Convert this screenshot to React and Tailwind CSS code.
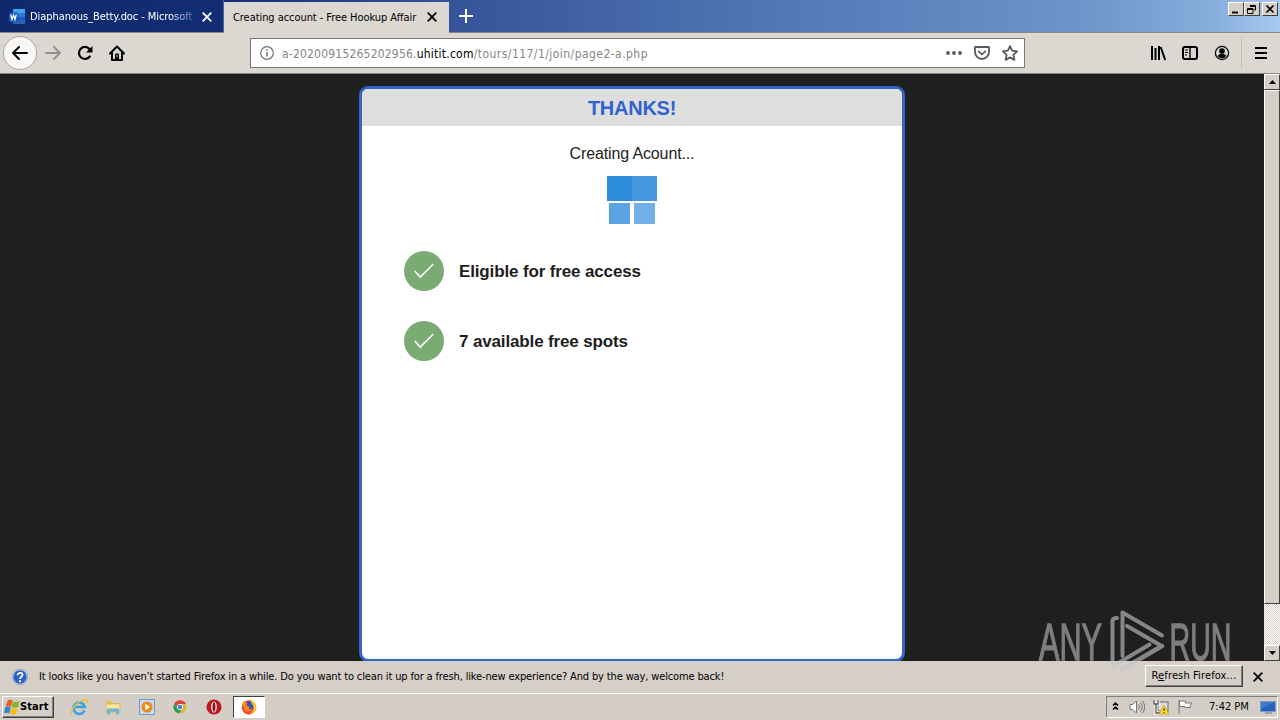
import React from "react";

const ui = "font-['DejaVu_Sans_Condensed','DejaVu_Sans',sans-serif] [font-stretch:condensed] whitespace-pre";

function Cross({ className, width = 1.8 }) {
  return (
    <svg className={className} viewBox="0 0 10 10" fill="none" stroke="currentColor" strokeWidth={width}>
      <path d="M.7.7l8.6 8.6M9.3.7L.7 9.3" />
    </svg>
  );
}

function WordIcon() {
  return (
    <svg className="h-4 w-4 shrink-0" viewBox="0 0 16 16">
      <rect x="4" y="0" width="12" height="4" fill="#41a5ee" />
      <rect x="4" y="4" width="12" height="4" fill="#2b7cd3" />
      <rect x="4" y="8" width="12" height="3" fill="#185abd" />
      <rect x="4" y="11" width="12" height="4" fill="#2a62b4" />
      <rect x="0" y="3.500" width="9" height="9" rx="1" fill="#185abd" />
      <path d="M1.700 5.500l1.300 5 1.500-4.600L6 10.500l1.300-5" fill="none" stroke="#fff" strokeWidth="1.200" />
    </svg>
  );
}

function TabStrip() {
  return (
    <header className="flex h-[33px] shrink-0 border-b border-[#8a8780] bg-[linear-gradient(90deg,#0e2a6c_0%,#122d74_17%,#36549a_36%,#5379b7_62%,#7095ca_85%,#88aedd_95%,#a6caf0_100%)]">
      <div className={`${ui} flex w-56 items-center border-r border-[#4b6299] pl-[9px] pt-[2px] text-[11px] text-white`}>
        <WordIcon />
        <span className="ml-[5px] w-[164px] overflow-hidden tracking-[-0.07px] [mask-image:linear-gradient(90deg,#000_85%,rgba(0,0,0,.25)_100%)]">Diaphanous_Betty.doc - Microsoft</span>
        <Cross className="ml-2 h-[10px] w-[10px] shrink-0" />
      </div>
      <div className={`${ui} -mb-px mt-[2px] flex w-[225px] items-center bg-[#dbd8d1] pl-[9px] text-[11px] text-black`}>
        <span className="w-[185px] pt-px tracking-[-0.06px]">Creating account - Free Hookup Affair</span>
        <Cross className="-mt-px ml-[9px] h-[10px] w-[10px]" />
      </div>
      <div className="flex w-[34px] items-center justify-center">
        <svg className="h-[14px] w-[14px]" viewBox="0 0 14 14" stroke="#fff" strokeWidth="2"><path d="M7 0v14M0 7h14" /></svg>
      </div>
      <div className="ml-auto mr-[2px] mt-[2px] flex h-[14px]">
        <WindowButton><path d="M3 9.500h6" strokeWidth="2" /></WindowButton>
        <WindowButton><path d="M5 2.500h5.500V7H9M5 3.500h5.500M2.500 5.500H8v5H2.500zM2.500 6.500H8" /></WindowButton>
        <span className="w-[2px]" />
        <WindowButton><path d="M3.500 2.500l7 7M10.500 2.500l-7 7" strokeWidth="1.600" /></WindowButton>
      </div>
    </header>
  );
}

function WindowButton({ children }) {
  return (
    <span className="flex h-[14px] w-4 border border-t-white border-l-white border-r-[#404040] border-b-[#404040] bg-[#d4d0c8]">
      <svg className="h-3 w-[14px]" viewBox="0 0 14 12" fill="none" stroke="#000">{children}</svg>
    </span>
  );
}

function NavBar() {
  return (
    <nav className="flex h-[41px] shrink-0 items-center border-b border-[#8b8984] bg-[#dbd8d1]">
      <span className="ml-[3px] flex h-[34px] w-[34px] items-center justify-center rounded-full border border-[#aaa79f] bg-[#f9f8f6]">
        <svg className="h-4 w-4" viewBox="0 0 16 16" fill="none" stroke="#000" strokeWidth="2" strokeLinecap="round" strokeLinejoin="round"><path d="M15 8H1.500M7 2L1 8l6 6" /></svg>
      </span>
      <svg className="ml-2 h-4 w-4" viewBox="0 0 16 16" fill="none" stroke="#93908b" strokeWidth="1.800" strokeLinecap="round" strokeLinejoin="round"><path d="M1 8h13.500M9 2l6 6-6 6" /></svg>
      <svg className="ml-4 h-4 w-4" viewBox="0 0 16 16" fill="none" stroke="#000" strokeWidth="2.200" strokeLinecap="round"><path d="M12.800 11.500A6 6 0 1 1 12.500 4" /><path d="M15.500 1v6.500H9z" fill="#000" stroke="none" /></svg>
      <svg className="ml-4 h-4 w-4" viewBox="0 0 16 16" fill="none" stroke="#000" strokeWidth="2" strokeLinecap="round" strokeLinejoin="round"><path d="M1 8.500L8 1.500l7 7M3 7.500V15h10V7.500" /><path d="M6.500 14V9h3v5" fill="#000" strokeWidth="1" /><path d="M8 10v2" stroke="#dbd8d1" strokeWidth="1" /></svg>
      <div className={`${ui} ml-[125px] flex h-[30px] w-[775px] items-center border border-[#7a7872] bg-white text-[12px] text-[#85858a]`}>
        <svg className="ml-[9px] h-[14px] w-[14px]" viewBox="0 0 14 14" fill="none" stroke="#737373"><circle cx="7" cy="7" r="6.300" strokeWidth="1.200" /><path d="M7 6.200V10.500M7 3.200v1.600" strokeWidth="1.600" /></svg>
        <span className="ml-[8px] w-[560px] pt-px">
          <span className="tracking-[0.2px]">a-20200915265202956.</span><span className="tracking-[0.24px] text-black">uhitit.com</span><span className="tracking-[0.45px]">/tours/117/1/join/page2-a.php</span>
        </span>
        <svg className="ml-auto h-4 w-4" viewBox="0 0 16 16" fill="#5a5a5c"><circle cx="2" cy="8" r="1.900" /><circle cx="8" cy="8" r="1.900" /><circle cx="14" cy="8" r="1.900" /></svg>
        <svg className="ml-3 h-4 w-4" viewBox="0 0 16 16" fill="none" stroke="#5a5a5c" strokeWidth="1.800" strokeLinecap="round" strokeLinejoin="round"><path d="M1 2h14v5a7 7 0 0 1-14 0z" /><path d="M4.700 6.300L8 9.500l3.300-3.200" strokeWidth="1.700" /></svg>
        <svg className="ml-3 mr-[6px] h-4 w-4" viewBox="0 0 16 16" fill="none" stroke="#5a5a5c" strokeWidth="1.800" strokeLinejoin="round"><path d="M8 1l2.100 4.700 5 .6-3.700 3.500 1 5.100L8 12.400l-4.400 2.500 1-5.100L.9 6.300l5-.6z" /></svg>
      </div>
      <svg className="ml-[125px] h-4 w-4" viewBox="0 0 16 16" fill="none" stroke="#000" strokeWidth="2"><path d="M2 1v14M5.500 3v12M9 1v14M10.700 2l4.500 13" /></svg>
      <svg className="ml-4 h-4 w-4" viewBox="0 0 16 16" fill="none" stroke="#000" strokeWidth="2"><rect x="1" y="2" width="14" height="12" rx="2" /><path d="M8 2v12" strokeWidth="1.400" /><path d="M3 5h3M3 7.500h3M3 10h2" strokeWidth="1" /></svg>
      <svg className="ml-4 h-4 w-4" viewBox="0 0 16 16"><circle cx="8" cy="8" r="6.600" fill="none" stroke="#000" strokeWidth="1.200" /><circle cx="8" cy="6" r="2.800" /><path d="M3.500 11c1.200-1.800 2.600-2.300 4.500-2.300s3.300.5 4.500 2.300A6 6 0 0 1 8 13.500 6 6 0 0 1 3.500 11z" /></svg>
      <span className="ml-[11px] h-8 w-px bg-[#c2bfb7]" />
      <svg className="ml-3 h-[14px] w-[14px]" viewBox="0 0 14 14" stroke="#000" strokeWidth="2"><path d="M1 2h12M1 7h12M1 12h12" /></svg>
    </nav>
  );
}

function Check({ children }) {
  return (
    <li className="flex h-10 items-center">
      <span className="flex h-10 w-10 items-center justify-center rounded-full bg-[#7aab73]">
        <svg className="h-4 w-5" viewBox="0 0 20 16" fill="none" stroke="#fff" strokeWidth="1.600"><path d="M.7 8l5.600 6L19.300 1" /></svg>
      </span>
      <span className="ml-[15px] whitespace-pre pt-[2px] font-['Liberation_Sans',sans-serif] text-[17px] font-bold tracking-[-0.14px] text-[#1d1d1d]">{children}</span>
    </li>
  );
}

function Watermark() {
  return (
    <svg className="absolute left-[1030px] top-[596px] h-[90px] w-[220px] overflow-visible" viewBox="1030 596 220 90" opacity=".62">
      <g fill="#b8b8b8" stroke="#b8b8b8" strokeWidth="1.300" fontFamily="'Liberation Sans Narrow','Liberation Sans',sans-serif" fontSize="52">
        <text x="1039" y="659.500" textLength="63" lengthAdjust="spacingAndGlyphs">ANY</text>
        <text x="1169.500" y="659.500" textLength="62" lengthAdjust="spacingAndGlyphs">RUN</text>
      </g>
      <g fill="none" stroke="#c6c6c6" strokeLinejoin="round" strokeLinecap="round">
        <path d="M1122.500 656V612.500L1162 635.500M1127 626l33 19" strokeWidth="4" />
        <path d="M1117 618q-4.500 0-4.500 3v45.500l37-22" strokeWidth="4" />
        <path d="M1122.500 669l39.500-23" strokeWidth="4.500" />
      </g>
    </svg>
  );
}

function Scrollbar() {
  const cap = "flex h-4 w-4 items-center justify-center border border-t-white border-l-white border-r-[#404040] border-b-[#404040] bg-[#d4d0c8]";
  return (
    <div className="flex w-4 flex-col bg-[repeating-conic-gradient(#fff_0_25%,#d4d0c8_0_50%)] bg-[length:2px_2px]">
      <span className={cap}><svg className="h-1 w-[7px]" viewBox="0 0 7 4"><path d="M0 4l3.500-4L7 4z" /></svg></span>
      <span className="h-[514px] border border-t-white border-l-white border-r-[#404040] border-b-[#404040] bg-[#d4d0c8]" />
      <span className={`${cap} mt-auto`}><svg className="h-1 w-[7px]" viewBox="0 0 7 4"><path d="M0 0l3.500 4L7 0z" /></svg></span>
    </div>
  );
}

function Page() {
  return (
    <main className="flex h-[587px] shrink-0 bg-[#1f1f1f]">
      <div className="flex flex-1 justify-center pt-3">
        <section className="h-[576px] w-[546px] overflow-hidden rounded-[9px] border-[3px] border-[#3465c9] bg-white font-['Liberation_Sans',sans-serif]">
          <h1 className="h-[37px] bg-[#dedede] text-center text-[20px] font-bold leading-[38px] tracking-[-0.25px] text-[#3163cf]">THANKS!</h1>
          <p className="mt-[17px] text-center text-[16px] leading-[22px] tracking-[-0.13px] text-[#222]">Creating Acount...</p>
          <div className="mx-auto mt-[11px] flex h-[50px] w-[50px] flex-wrap content-start">
            <span className="h-[25px] w-[25px] bg-[#2c8cda]" />
            <span className="h-[25px] w-[25px] bg-[#4598de]" />
            <span className="ml-[2px] mt-[2px] h-[21px] w-[21px] bg-[#5ba4e4]" />
            <span className="ml-1 mt-[2px] h-[21px] w-[21px] bg-[#71b1e8]" />
          </div>
          <ul className="ml-[42px] mt-[25px] flex flex-col gap-[30px]">
            <Check>Eligible for free access</Check>
            <Check>7 available free spots</Check>
          </ul>
        </section>
      </div>
      <Scrollbar />
    </main>
  );
}

function Notice() {
  return (
    <div className={`${ui} flex h-8 shrink-0 items-center bg-[#d6cfc8] text-[11px] text-black`}>
      <svg className="ml-3 h-4 w-4" viewBox="0 0 16 16"><circle cx="8" cy="8" r="7.300" fill="#2e61c5" stroke="#fff" /><circle cx="8" cy="8" r="7.700" fill="none" stroke="#5878b5" strokeWidth=".6" /><path d="M5.700 6.300c0-3.300 4.800-3.200 4.800-.4C10.500 7.500 8 7.800 8 10" fill="none" stroke="#fff" strokeWidth="1.800" /><circle cx="8" cy="12.200" r="1.100" fill="#fff" /></svg>
      <span className="ml-[11px] pt-px tracking-[-0.14px]">It looks like you haven’t started Firefox in a while. Do you want to clean it up for a fresh, like-new experience? And by the way, welcome back!</span>
      <button className="ml-auto mr-[10px] h-[22px] w-[98px] -translate-y-px border border-t-white border-l-white border-r-[#404040] border-b-[#404040] pt-px tracking-[0.13px] shadow-[inset_-1px_-1px_#808080]">R<u>e</u>fresh Firefox...</button>
      <Cross className="mr-[17px] h-[10px] w-[10px]" />
    </div>
  );
}

function Taskbar() {
  return (
    <footer className="flex h-[27px] shrink-0 items-center border-t border-white bg-[#d4cec7]">
      <button className="ml-[2px] flex h-[22px] w-[52px] items-center border border-t-white border-l-white border-r-[#404040] border-b-[#404040] shadow-[inset_-1px_-1px_#808080]">
        <svg className="ml-px h-4 w-4" viewBox="0 0 16 16"><path d="M3.500 1.500c2-1 3.500-1 5 .2L7 8C5.500 6.800 3.500 6.800 1.500 7.700z" fill="#ee5b23" /><path d="M9 2.200c2 1 3.800 1 6.500-.2L14 8c-2 1-4.500 1-6.500 0z" fill="#7eb92e" /><path d="M1.200 8.300c2-1 3.800-1 5.500.2L5.200 14.500c-1.500-1-3.200-1-5.200-.2z" fill="#2f83d6" /><path d="M7.300 9c2 1 4.200 1 6.400.2L12.200 15c-2 1-4.500 1-6.400-.2z" fill="#fbbb12" /></svg>
        <span className={`${ui} text-[11px] font-bold tracking-[0.1px] text-black`}>Start</span>
      </button>
      <svg className="ml-4 h-[18px] w-[18px]" viewBox="0 0 18 18" fill="none"><path d="M14.500 12.500A5.700 5.700 0 1 1 14.800 9H5" stroke="#36a4e2" strokeWidth="2.600" /><path d="M2 16.500C-2 13 11-.5 16.500 2c1 .7.500 2.500-.5 4" stroke="#efbe35" strokeWidth="1.400" /></svg>
      <svg className="ml-4 h-[18px] w-[18px]" viewBox="0 0 18 18"><path d="M2 3h5l1 2h8v10H2z" fill="#e6bf58" /><path d="M2 6h14v7H2z" fill="#fbe69b" stroke="#cda94b" strokeWidth=".6" /><path d="M3 16.500v-6h12v6h-3v-3H6v3z" fill="#67b6df" /></svg>
      <svg className="ml-4 h-[18px] w-[18px]" viewBox="0 0 18 18"><rect x="1.500" y="1.500" width="15" height="15" fill="#c6dcf3" stroke="#6c9ccd" /><circle cx="9" cy="9" r="5.600" fill="#f28816" /><path d="M7.300 5.700l5 3.300-5 3.300z" fill="#fff" /></svg>
      <svg className="ml-4 h-[16px] w-[16px]" viewBox="0 0 16 16"><circle cx="8" cy="8" r="6.500" fill="#e0b72c" /><path d="M2.200 5A6.500 6.500 0 0 1 14 5H8v6z" fill="#db4437" /><path d="M2.200 5A6.500 6.500 0 0 0 7 14.400L10.500 9 8 10 5.500 9z" fill="#249c59" /><circle cx="8" cy="8" r="3" fill="#fff" /><circle cx="8" cy="8" r="2.300" fill="#4285e8" /></svg>
      <svg className="ml-[18px] h-4 w-4" viewBox="0 0 16 16"><circle cx="8" cy="8" r="7.500" fill="#bd1720" /><ellipse cx="8" cy="8" rx="2.800" ry="5.500" fill="#fff" /><ellipse cx="8" cy="8" rx="1.500" ry="4.700" fill="#981017" /></svg>
      <span className="ml-[11px] flex h-[22px] w-8 items-center justify-center border border-t-[#404040] border-l-[#404040] border-r-white border-b-white bg-white">
        <svg className="h-4 w-4" viewBox="0 0 16 16"><circle cx="8" cy="8.500" r="7.200" fill="#ee4a2c" /><circle cx="8.500" cy="6.800" r="4.800" fill="#3a4cb4" /><path d="M1.500 5Q1.800 3 3 1.800 4 3.500 6.500 4 5 5.500 6 7l3 1-1.500 1.500Q9.500 11 11.500 9q-1.500 4-5 3.500T1.500 5z" fill="#ff8716" /><path d="M9 .3c5.500 2 8 8 5 12-1.500 2.200-4 3.200-6 3.200 4-2.500 5.500-5.500 4-9C11.200 4.500 9 3 9 .3z" fill="#ffc42c" /></svg>
      </span>
      <div className="ml-auto mr-[2px] flex h-[22px] w-[172px] items-center border border-t-[#808080] border-l-[#808080] border-r-white border-b-white">
        <svg className="ml-[5px] -mt-[2px] h-2 w-[7px]" viewBox="0 0 7 8" fill="none" stroke="#000" strokeWidth="1.500"><path d="M1 3.500L3.500 1 6 3.500M1 7.500L3.500 5 6 7.500" /></svg>
        <svg className="ml-[10px] h-4 w-4" viewBox="0 0 16 16" fill="none" stroke="#777"><path d="M1 5.500h2.500L7.500 2v12l-4-3.500H1z" fill="#fff" /><path d="M9.500 5.500q2 2.500 0 5M11.500 3.500q3.500 4.500 0 9M13.500 2q4.500 6 0 12" /></svg>
        <svg className="ml-2 h-4 w-4" viewBox="0 0 16 16" fill="none"><rect x="5" y="3" width="10" height="9" fill="#d9e0e6" stroke="#666" /><path d="M1 1v4h4V1M3 5v9h5" stroke="#fff" strokeWidth="3" /><path d="M1 1v4h4V1M3 5v9h5" stroke="#555" strokeWidth="1.300" /><path d="M11 6l5 9H6z" fill="#ffdb20" stroke="#b58a08" strokeWidth=".5" /><path d="M11 9v3M11 13v1" stroke="#222" /></svg>
        <svg className="ml-2 h-4 w-4" viewBox="0 0 16 16" fill="#fff" stroke="#777"><path d="M2 1v14M2.500 2h6v2H15l-2 3 .5 1.500H8V7.500H2.500z" /></svg>
        <span className={`${ui} ml-4 pt-px text-[11px] text-black`}>7:42 PM</span>
        <svg className="ml-auto mr-[1px] h-4 w-4" viewBox="0 0 16 16"><rect x=".5" y="2.500" width="15" height="10" fill="#2362bd" stroke="#7d9bc0" /><path d="M1 3h14L1 10z" fill="#4078c5" /><path d="M5 14h7" stroke="#8792a0" strokeWidth="1.500" /></svg>
      </div>
    </footer>
  );
}

export default function App() {
  return (
    <div className="relative flex h-[720px] w-[1280px] flex-col overflow-hidden">
      <TabStrip />
      <NavBar />
      <Page />
      <Notice />
      <Taskbar />
      <Watermark />
    </div>
  );
}
